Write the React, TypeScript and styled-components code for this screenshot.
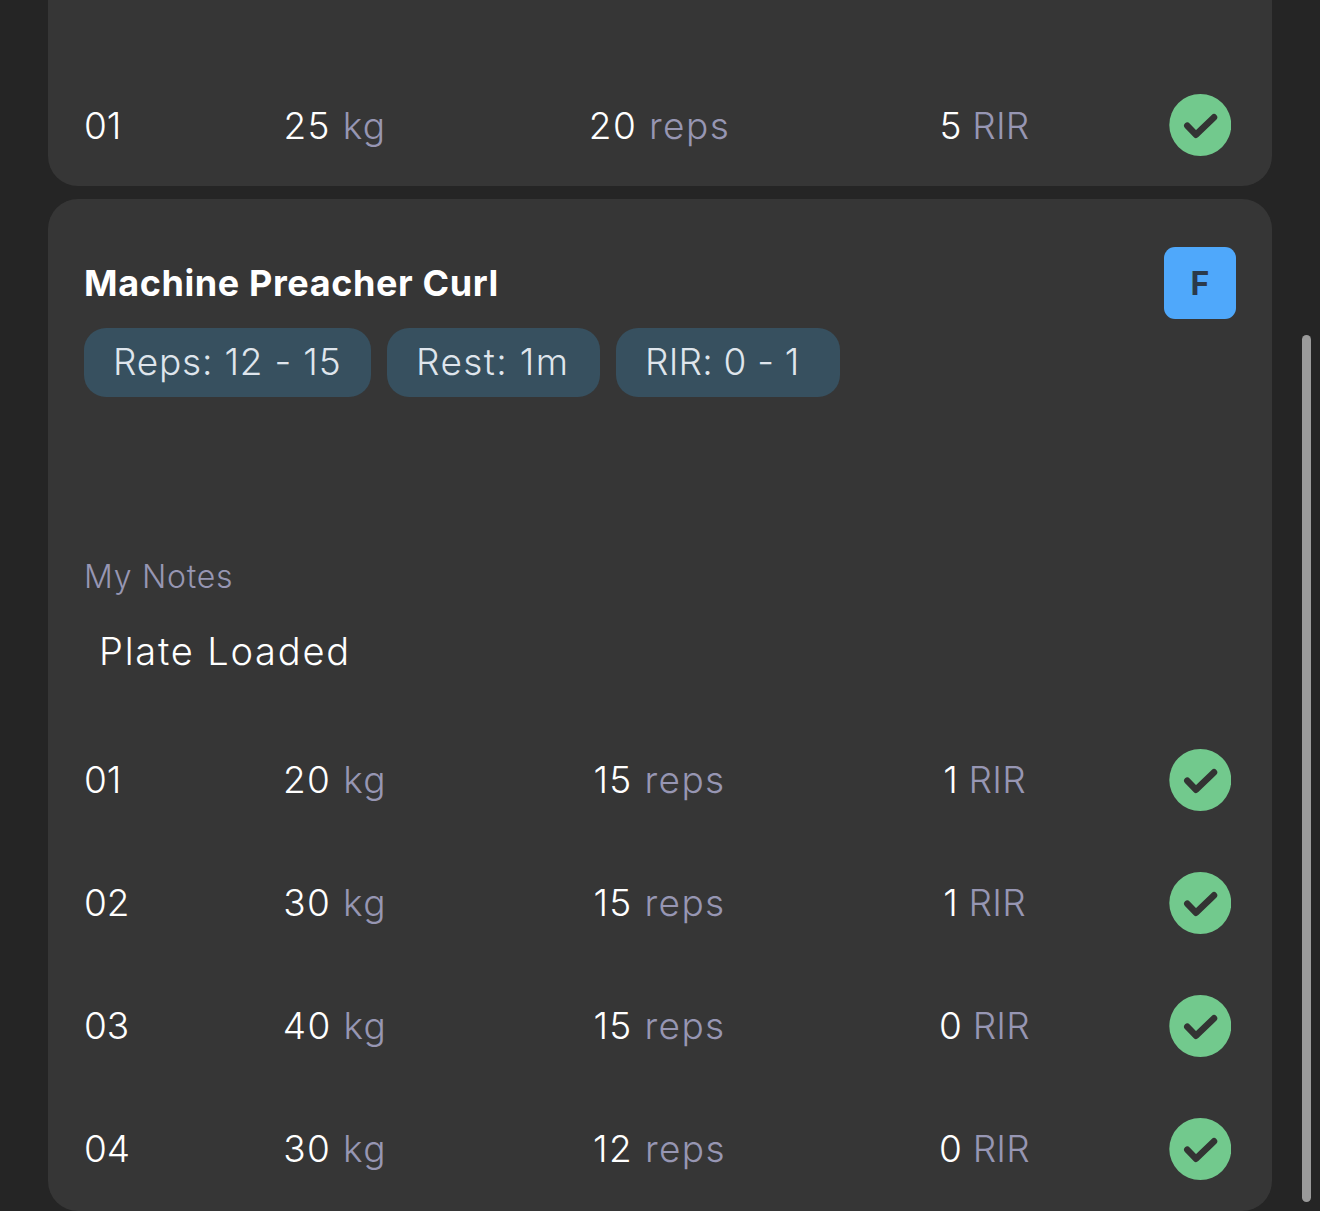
import React from "react";
import styled, { createGlobalStyle } from "styled-components";

const Global = createGlobalStyle`
  html, body { margin: 0; padding: 0; background: #252525; }
  body { font-family: "Inter", "Noto Sans", sans-serif; }
`;

const Page = styled.div`
  position: relative;
  width: 1320px;
  height: 1211px;
  overflow: hidden;
  background: #252525;
  display: flex;
  flex-direction: column;
  gap: 13px;
  padding: 0 48px;
  box-sizing: border-box;
`;

const TopCard = styled.section`
  flex: none;
  height: 186px;
  box-sizing: border-box;
  background: #363636;
  border-radius: 0 0 30px 30px;
  padding: 0 36px;
  display: flex;
  flex-direction: column;
  justify-content: flex-end;
  & > div { height: 122px; }
`;

const Card = styled.section`
  flex: none;
  height: 1012px;
  box-sizing: border-box;
  background: #363636;
  border-radius: 30px;
  padding: 48px 36px 0;
  display: flex;
  flex-direction: column;
`;

const Header = styled.div`
  display: flex;
  justify-content: space-between;
  height: 72px;
  align-items: center;
`;

const Title = styled.h2`
  margin: 0;
  font-size: 36px;
  font-weight: 700;
  letter-spacing: 0.6px;
  color: #ffffff;
`;

const Badge = styled.div`
  width: 72px;
  height: 72px;
  border-radius: 11px;
  background: #4fa8fb;
  color: #2b3a4a;
  font-size: 32px;
  font-weight: 700;
  display: flex;
  align-items: center;
  justify-content: center;
`;

const Chips = styled.div`
  display: flex;
  gap: 16px;
  margin-top: 9px;
`;

const Chip = styled.span<{ $w: number; $ls: number }>`
  width: ${(p) => p.$w}px;
  height: 69px;
  box-sizing: border-box;
  padding: 0 0 2px 29px;
  border-radius: 22px;
  background: #37505f;
  color: #dfe5ec;
  font-size: 37px;
  font-weight: 300;
  letter-spacing: ${(p) => p.$ls}px;
  display: flex;
  align-items: center;
  white-space: nowrap;
`;

const NotesLabel = styled.div`
  margin-top: 158px;
  height: 44px;
  line-height: 44px;
  font-size: 32px;
  font-weight: 300;
  letter-spacing: 0.75px;
  color: #9796b3;
`;

const NotesText = styled.div`
  margin-top: 31px;
  padding-left: 15px;
  height: 44px;
  line-height: 42px;
  font-size: 38px;
  font-weight: 300;
  letter-spacing: 1.8px;
  color: #ffffff;
`;

const Rows = styled.div`
  margin-top: 44px;
`;

const RowWrap = styled.div`
  display: grid;
  grid-template-columns: 89px 324px 325px 325px 1fr;
  align-items: center;
  height: 123px;
  font-size: 37px;
  font-weight: 300;
  color: #ffffff;
`;

const SetNo = styled.span``;

const Val = styled.span<{ $ls: number }>`
  text-align: center;
  white-space: nowrap;
  letter-spacing: ${(p) => p.$ls}px;
`;

const Unit = styled.span`
  color: #9796b3;
`;

const Done = styled.span`
  justify-self: end;
  margin-right: 5px;
  width: 62px;
  height: 62px;
  display: block;
`;

const ScrollThumb = styled.div`
  position: absolute;
  left: 1302px;
  top: 335px;
  width: 9px;
  height: 867px;
  border-radius: 5px;
  background: #9a9a9a;
`;

const Check = () => (
  <Done>
    <svg width="62" height="62" viewBox="0 0 62 62">
      <circle cx="31.3" cy="31" r="31" fill="#72c98d" />
      <path d="M18.3 31.7 L27 40.7 L45 23.3" fill="none" stroke="#333" strokeWidth="6.5" strokeLinecap="round" strokeLinejoin="round" />
    </svg>
  </Done>
);

const Row = ({ n, kg, reps, rir }: { n: string; kg: number; reps: number; rir: number }) => (
  <RowWrap>
    <SetNo>{n}</SetNo>
    <Val $ls={1.4}>{kg} <Unit>kg</Unit></Val>
    <Val $ls={1.4}>{reps} <Unit>reps</Unit></Val>
    <Val $ls={0.2}>{rir} <Unit>RIR</Unit></Val>
    <Check />
  </RowWrap>
);

export default function App() {
  return (
    <Page>
      <Global />
      <TopCard>
        <Row n="01" kg={25} reps={20} rir={5} />
      </TopCard>
      <Card>
        <Header>
          <Title>Machine Preacher Curl</Title>
          <Badge>F</Badge>
        </Header>
        <Chips>
          <Chip $w={287} $ls={0.8}>Reps: 12 - 15</Chip>
          <Chip $w={213} $ls={1.4}>Rest: 1m</Chip>
          <Chip $w={224} $ls={0.2}>RIR: 0 - 1</Chip>
        </Chips>
        <NotesLabel>My Notes</NotesLabel>
        <NotesText>Plate Loaded</NotesText>
        <Rows>
          <Row n="01" kg={20} reps={15} rir={1} />
          <Row n="02" kg={30} reps={15} rir={1} />
          <Row n="03" kg={40} reps={15} rir={0} />
          <Row n="04" kg={30} reps={12} rir={0} />
        </Rows>
      </Card>
      <ScrollThumb />
    </Page>
  );
}
